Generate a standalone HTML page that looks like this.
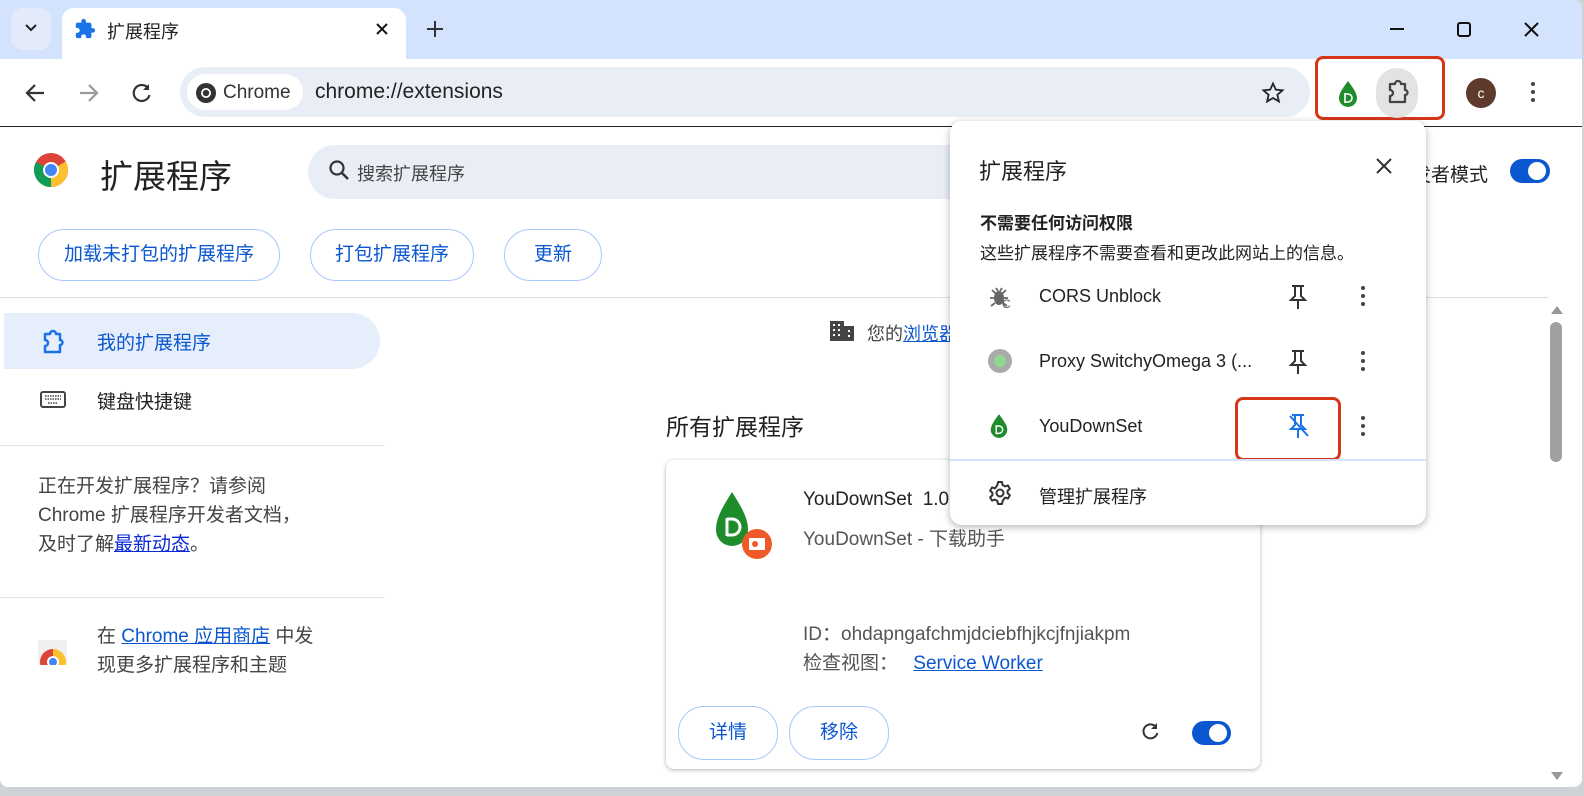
<!DOCTYPE html>
<html><head><meta charset="utf-8"><style>
*{box-sizing:border-box;margin:0;padding:0}
body{width:1584px;height:796px;overflow:hidden;background:#cfd3d8;font-family:"Liberation Sans","Noto Sans CJK SC",sans-serif;position:relative}
.win{position:absolute;left:0;top:0;width:1582px;height:787px;background:#fff;border-radius:0 8px 8px 8px;overflow:hidden}
.abs{position:absolute}
.tabs{left:0;top:0;width:1582px;height:59px;background:#d3e3fd}
.tb{left:0;top:59px;width:1582px;height:68px;background:#fff;border-bottom:1px solid #222}
.t{position:absolute;white-space:nowrap}
.btn{position:absolute;border:1px solid #a8c7fa;border-radius:26px;color:#0b57d0;font-size:19px;text-align:center}
.dots{position:absolute;width:4px}
.dots i{display:block;width:4px;height:4px;border-radius:2px;background:#444;margin-bottom:4px}
</style></head><body>
<div class="win">
<div class="abs tabs"></div>
<div class="abs" style="left:11px;top:8px;width:40px;height:42px;border-radius:12px;background:#e3ebfb"></div>
<svg class="abs" style="left:24px;top:22px" width="14" height="12"><path d="M2 3l5 5 5-5" stroke="#222" stroke-width="2" fill="none"/></svg>
<div class="abs" style="left:62px;top:8px;width:344px;height:52px;background:#fff;border-radius:12px 12px 0 0"></div>
<svg class="abs" style="left:74px;top:18px" width="22" height="22" viewBox="0 0 24 24"><path d="M20.5 11H19V7c0-1.1-.9-2-2-2h-4V3.5a2.5 2.5 0 00-5 0V5H4c-1.1 0-2 .9-2 2v3.8h1.5a2.7 2.7 0 010 5.4H2V20c0 1.1.9 2 2 2h3.8v-1.5a2.7 2.7 0 015.4 0V22H17c1.1 0 2-.9 2-2v-4h1.5a2.5 2.5 0 000-5z" fill="#1a73e8"/></svg>
<div class="t" style="left:107px;top:18px;font-size:18px;color:#222">扩展程序</div>
<svg class="abs" style="left:375px;top:22px" width="14" height="14"><path d="M2 2l10 10M12 2L2 12" stroke="#111" stroke-width="2"/></svg>
<svg class="abs" style="left:426px;top:20px" width="18" height="18"><path d="M9 1v16M1 9h16" stroke="#333" stroke-width="2"/></svg>
<svg class="abs" style="left:1390px;top:22px" width="180" height="18"><path d="M0 7h14" stroke="#111" stroke-width="2"/><rect x="68" y="1" width="12" height="13" rx="2" stroke="#111" stroke-width="2" fill="none"/><path d="M135 1l13 13M148 1l-13 13" stroke="#111" stroke-width="2"/></svg>
<div class="abs tb"></div>
<svg class="abs" style="left:24px;top:82px" width="24" height="22"><path d="M20 11H4M11 3l-8 8 8 8" stroke="#333" stroke-width="2.2" fill="none"/></svg>
<svg class="abs" style="left:77px;top:82px" width="24" height="22"><path d="M3 11h16M12 3l8 8-8 8" stroke="#999" stroke-width="2.2" fill="none"/></svg>
<svg class="abs" style="left:131px;top:82px" width="22" height="22"><path d="M17 6a8 8 0 101.5 7" stroke="#333" stroke-width="2.2" fill="none"/><path d="M18 2v6h-6" fill="#333"/></svg>
<div class="abs" style="left:180px;top:67px;width:1130px;height:50px;background:#e9eef6;border-radius:25px"></div>
<div class="abs" style="left:187px;top:74px;width:116px;height:36px;background:#fff;border-radius:18px"></div>
<svg class="abs" style="left:195px;top:82px" width="22" height="22" viewBox="0 0 22 22"><circle cx="11" cy="11" r="10" fill="#333"/><circle cx="11" cy="11" r="5" fill="#fff"/><circle cx="11" cy="11" r="3.2" fill="#333"/></svg>
<div class="t" style="left:223px;top:82px;font-size:19px;color:#333">Chrome</div>
<div class="t" style="left:315px;top:80px;font-size:21px;color:#222">chrome://extensions</div>
<svg class="abs" style="left:1261px;top:81px" width="24" height="24" viewBox="0 0 24 24"><path d="M12 2.5l2.8 6.2 6.7.6-5.1 4.5 1.5 6.6L12 17l-5.9 3.4 1.5-6.6-5.1-4.5 6.7-.6z" stroke="#222" stroke-width="1.8" fill="none"/></svg>
<div class="abs" style="left:1315px;top:56px;width:130px;height:64px;border:3px solid #d8361b;border-radius:8px"></div>
<svg class="abs" style="left:1336px;top:80px" width="24" height="28" viewBox="0 0 24 28"><path d="M12 1C7 8 3 13 3 18a9 9 0 0018 0c0-5-4-10-9-17z" fill="#1e8c2a"/><path d="M9 13v10M9 14h3a4 4 0 010 8H9" stroke="#fff" stroke-width="1.6" fill="none"/></svg>
<div class="abs" style="left:1376px;top:68px;width:42px;height:50px;border-radius:21px;background:#e3e3e3"></div>
<svg class="abs" style="left:1386px;top:78px" width="26" height="28" viewBox="0 0 26 28"><path d="M4 6h5a3 3 0 016 0h4v6a2.5 2.5 0 010 5v7H4v-6a3 3 0 000-6z" stroke="#444" stroke-width="2.3" fill="none" stroke-linejoin="round"/></svg>
<div class="abs" style="left:1466px;top:78px;width:30px;height:30px;border-radius:15px;background:#5e3a2c;color:#fff;font-size:14px;text-align:center;line-height:30px">c</div>
<div class="dots" style="left:1531px;top:82px"><i></i><i></i><i></i></div>

<!-- header -->
<svg class="abs" style="left:33px;top:152px" width="36" height="36" viewBox="0 0 36 36"><circle cx="18" cy="18" r="17" fill="#db4437"/><path d="M18 18L3.3 26.5A17 17 0 0018 35z" fill="#0f9d58"/><path d="M18 18L3.3 26.5A17 17 0 013 10z" fill="#0f9d58"/><path d="M18 18l14.7-8.5A17 17 0 0118 35z" fill="#fbc02d"/><circle cx="18" cy="18" r="8" fill="#fff"/><circle cx="18" cy="18" r="6" fill="#4285f4"/></svg>
<div class="t" style="left:100px;top:150px;font-size:33px;color:#222">扩展程序</div>
<div class="abs" style="left:308px;top:145px;width:700px;height:54px;background:#e9eef6;border-radius:27px"></div>
<svg class="abs" style="left:328px;top:159px" width="22" height="24"><circle cx="9" cy="9" r="6.5" stroke="#333" stroke-width="2.2" fill="none"/><path d="M14 14l6 6" stroke="#333" stroke-width="2.5"/></svg>
<div class="t" style="left:357px;top:160px;font-size:18px;color:#444">搜索扩展程序</div>
<div class="t" style="left:1393px;top:160px;font-size:19px;color:#222">开发者模式</div>
<div class="abs" style="left:1510px;top:159px;width:40px;height:24px;border-radius:12px;background:#0b57d0"></div>
<div class="abs" style="left:1528px;top:162px;width:18px;height:18px;border-radius:9px;background:#fff"></div>
<div class="btn" style="left:38px;top:229px;width:242px;height:52px;line-height:50px">加载未打包的扩展程序</div>
<div class="btn" style="left:310px;top:229px;width:164px;height:52px;line-height:50px">打包扩展程序</div>
<div class="btn" style="left:504px;top:229px;width:98px;height:52px;line-height:50px">更新</div>
<div class="abs" style="left:0;top:297px;width:1548px;height:1px;background:#ddd"></div>

<!-- sidebar -->
<div class="abs" style="left:4px;top:313px;width:376px;height:56px;background:#e6eefc;border-radius:0 28px 28px 0"></div>
<svg class="abs" style="left:40px;top:328px" width="28" height="28" viewBox="0 0 26 28"><path d="M4 6h5a3 3 0 016 0h4v6a2.5 2.5 0 010 5v7H4v-6a3 3 0 000-6z" stroke="#1a73e8" stroke-width="2.5" fill="none" stroke-linejoin="round"/></svg>
<div class="t" style="left:97px;top:328px;font-size:19px;color:#0b57d0">我的扩展程序</div>
<svg class="abs" style="left:40px;top:391px" width="26" height="17"><rect x="1" y="1" width="24" height="15" rx="2" fill="none" stroke="#444" stroke-width="2"/><path d="M5 5h16M5 8h16M8 12h10" stroke="#444" stroke-width="1.5" stroke-dasharray="1.5 1"/></svg>
<div class="t" style="left:97px;top:387px;font-size:19px;color:#222">键盘快捷键</div>
<div class="abs" style="left:0;top:445px;width:385px;height:1px;background:#e3e3e3"></div>
<div class="t" style="left:38px;top:472px;font-size:19px;color:#444;line-height:29px">正在开发扩展程序？请参阅<br>Chrome 扩展程序开发者文档，<br>及时了解<span style="color:#0b28d9;text-decoration:underline">最新动态</span>。</div>
<div class="abs" style="left:0;top:597px;width:385px;height:1px;background:#e3e3e3"></div>
<div class="abs" style="left:38px;top:640px;width:29px;height:25px;background:#f0f0f0;overflow:hidden"><div style="position:absolute;left:2px;top:9px;width:26px;height:26px;border-radius:13px;background:conic-gradient(#fbc02d 0 120deg,#0f9d58 120deg 240deg,#db4437 240deg)"></div><div style="position:absolute;left:9px;top:16px;width:12px;height:12px;border-radius:6px;background:#fff"></div><div style="position:absolute;left:11px;top:18px;width:8px;height:8px;border-radius:4px;background:#4285f4"></div></div>
<div class="t" style="left:97px;top:622px;font-size:19px;color:#444;line-height:29px">在 <span style="color:#0b57d0;text-decoration:underline">Chrome 应用商店</span> 中发<br>现更多扩展程序和主题</div>

<!-- main -->
<svg class="abs" style="left:829px;top:320px" width="26" height="22"><rect x="1" y="1" width="14" height="20" fill="#444"/><rect x="15" y="6" width="10" height="15" fill="#444"/><g fill="#fff"><rect x="4" y="4" width="2" height="2"/><rect x="9" y="4" width="2" height="2"/><rect x="4" y="9" width="2" height="2"/><rect x="9" y="9" width="2" height="2"/><rect x="4" y="14" width="2" height="2"/><rect x="9" y="14" width="2" height="2"/><rect x="19" y="10" width="2" height="2"/><rect x="19" y="15" width="2" height="2"/></g></svg>
<div class="t" style="left:867px;top:320px;font-size:18px;color:#444">您的<span style="color:#0b57d0;text-decoration:underline">浏览器</span></div>
<div class="t" style="left:666px;top:408px;font-size:23px;color:#222">所有扩展程序</div>
<div class="abs" style="left:666px;top:460px;width:594px;height:309px;background:#fff;border-radius:8px;box-shadow:0 1px 4px rgba(0,0,0,.3)"></div>
<svg class="abs" style="left:708px;top:490px" width="68" height="72" viewBox="0 0 68 72"><path d="M24 2C14 18 8 28 8 40a16 16 0 0032 0C40 28 34 18 24 2z" fill="#1e8c2a"/><path d="M19 28v18M19 29h5a8 8 0 010 16h-5" stroke="#fff" stroke-width="3" fill="none"/><circle cx="49" cy="54" r="15" fill="#f05a28"/><rect x="41" y="48" width="16" height="12" rx="1" fill="#fff"/><circle cx="47" cy="54" r="3" fill="#f05a28"/></svg>
<div class="t" style="left:803px;top:489px;font-size:19px;color:#222">YouDownSet&nbsp; 1.0</div>
<div class="t" style="left:803px;top:524px;font-size:19px;color:#555">YouDownSet - 下载助手</div>
<div class="t" style="left:803px;top:619px;font-size:19px;color:#555">ID：ohdapngafchmjdciebfhjkcjfnjiakpm</div>
<div class="t" style="left:803px;top:648px;font-size:19px;color:#555">检查视图： <span style="color:#0b57d0;text-decoration:underline;margin-left:10px">Service Worker</span></div>
<div class="btn" style="left:678px;top:706px;width:100px;height:54px;line-height:52px">详情</div>
<div class="btn" style="left:789px;top:706px;width:100px;height:54px;line-height:52px">移除</div>
<svg class="abs" style="left:1140px;top:722px" width="20" height="20"><path d="M16 5a7 7 0 101.3 6" stroke="#333" stroke-width="2" fill="none"/><path d="M17 1v6h-6" fill="#333"/></svg>
<div class="abs" style="left:1192px;top:721px;width:39px;height:24px;border-radius:12px;background:#0b57d0"></div>
<div class="abs" style="left:1209px;top:724px;width:18px;height:18px;border-radius:9px;background:#fff"></div>

<!-- scrollbar -->
<svg class="abs" style="left:1550px;top:304px" width="14" height="12"><path d="M1 10L7 2l6 8z" fill="#999"/></svg>
<div class="abs" style="left:1550px;top:322px;width:12px;height:140px;border-radius:6px;background:#a0a0a0"></div>
<svg class="abs" style="left:1550px;top:770px" width="14" height="12"><path d="M1 2l6 8 6-8z" fill="#999"/></svg>

<!-- popup -->
<div class="abs" style="left:950px;top:121px;width:476px;height:404px;background:#fff;border-radius:12px;box-shadow:0 2px 8px rgba(0,0,0,.3)"></div>
<div class="t" style="left:979px;top:154px;font-size:22px;color:#222">扩展程序</div>
<svg class="abs" style="left:1376px;top:158px" width="16" height="16"><path d="M1 1l14 14M15 1L1 15" stroke="#333" stroke-width="2"/></svg>
<div class="t" style="left:980px;top:209px;font-size:17px;font-weight:bold;color:#222">不需要任何访问权限</div>
<div class="t" style="left:980px;top:239px;font-size:17px;color:#222">这些扩展程序不需要查看和更改此网站上的信息。</div>
<svg class="abs" style="left:988px;top:284px" width="26" height="26" viewBox="0 0 26 26"><ellipse cx="11" cy="14" rx="5" ry="7" fill="#666"/><path d="M4 6l4 4M18 6l-4 4M2 14h4M16 14h4M3 22l4-3M19 22l-4-3M8 4l2 3M14 4l-2 3" stroke="#666" stroke-width="1.8"/><text x="14" y="24" font-size="12" fill="#555" font-family="Liberation Sans">C</text></svg>
<div class="t" style="left:1039px;top:286px;font-size:18px;color:#222">CORS Unblock</div>
<svg class="abs" style="left:1287px;top:284px" width="22" height="26"><path d="M5 2h12M8 2v10l-4 4h14l-4-4V2M11 16v9" stroke="#333" stroke-width="2" fill="none"/></svg>
<div class="dots" style="left:1361px;top:286px"><i></i><i></i><i></i></div>
<div class="abs" style="left:988px;top:349px;width:24px;height:24px;border-radius:12px;background:#aaa"></div>
<div class="abs" style="left:994px;top:355px;width:12px;height:12px;border-radius:6px;background:#8fd98f"></div>
<div class="t" style="left:1039px;top:351px;font-size:18px;color:#222">Proxy SwitchyOmega 3 (...</div>
<svg class="abs" style="left:1287px;top:349px" width="22" height="26"><path d="M5 2h12M8 2v10l-4 4h14l-4-4V2M11 16v9" stroke="#333" stroke-width="2" fill="none"/></svg>
<div class="dots" style="left:1361px;top:351px"><i></i><i></i><i></i></div>
<svg class="abs" style="left:988px;top:413px" width="22" height="26" viewBox="0 0 24 28"><path d="M12 1C7 8 3 13 3 18a9 9 0 0018 0c0-5-4-10-9-17z" fill="#1e8c2a"/><path d="M9 13v10M9 14h3a4 4 0 010 8H9" stroke="#fff" stroke-width="1.6" fill="none"/></svg>
<div class="t" style="left:1039px;top:416px;font-size:18px;color:#222">YouDownSet</div>
<div class="abs" style="left:1235px;top:397px;width:106px;height:64px;border:3px solid #d8361b;border-radius:8px"></div>
<svg class="abs" style="left:1287px;top:413px" width="24" height="26"><path d="M5 2h12M8 2v10l-4 4h14l-4-4V2M11 16v9M3 3l18 20" stroke="#1a73e8" stroke-width="2" fill="none"/></svg>
<div class="dots" style="left:1361px;top:416px"><i></i><i></i><i></i></div>
<div class="abs" style="left:950px;top:459px;width:476px;height:2px;background:#d3e3fd"></div>
<svg class="abs" style="left:988px;top:481px" width="24" height="24" viewBox="0 0 24 24"><path d="M10 1h4l.6 3 2.4 1.4 2.9-1 2 3.4-2.3 2v2.4l2.3 2-2 3.4-2.9-1L14.6 20l-.6 3h-4l-.6-3L7 18.6l-2.9 1-2-3.4 2.3-2v-2.4l-2.3-2 2-3.4 2.9 1L9.4 4z" stroke="#333" stroke-width="2" fill="none" stroke-linejoin="round"/><circle cx="12" cy="12" r="3.5" stroke="#333" stroke-width="2" fill="none"/></svg>
<div class="t" style="left:1039px;top:483px;font-size:18px;color:#222">管理扩展程序</div>
</div>
</body></html>
